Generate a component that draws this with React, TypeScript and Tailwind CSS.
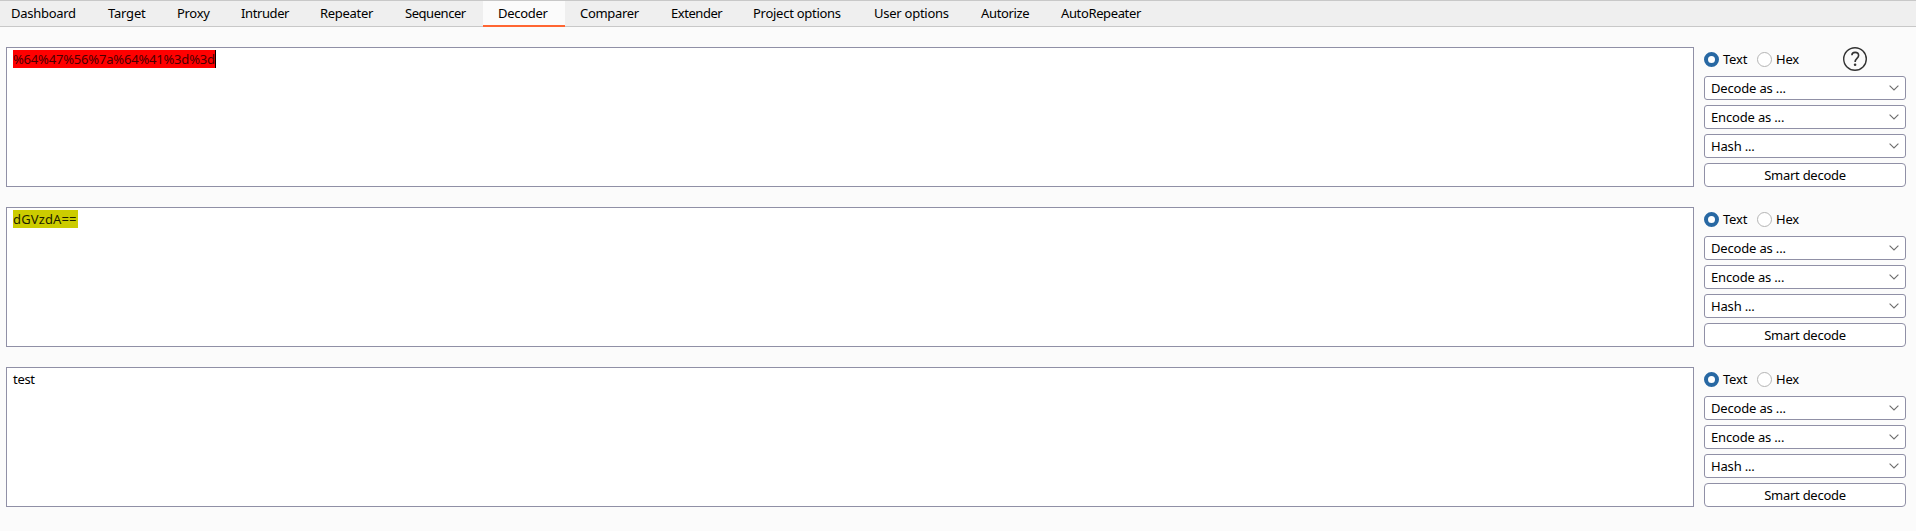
const tabs: { label: string; box: string; spacing: string }[] = [
  { label: 'Dashboard', box: 'w-[97px]', spacing: 'tracking-[-0.28px]' },
  { label: 'Target', box: 'w-[69px]', spacing: 'tracking-[-0.2px]' },
  { label: 'Proxy', box: 'w-[64px]', spacing: 'tracking-[-0.3px]' },
  { label: 'Intruder', box: 'w-[79px]', spacing: 'tracking-[-0.4px]' },
  { label: 'Repeater', box: 'w-[85px]', spacing: 'tracking-[-0.3px]' },
  { label: 'Sequencer', box: 'w-[93px]', spacing: 'tracking-[-0.45px]' },
  { label: 'Decoder', box: 'w-[82px]', spacing: 'tracking-[-0.3px]' },
  { label: 'Comparer', box: 'w-[91px]', spacing: 'tracking-[-0.3px]' },
  { label: 'Extender', box: 'w-[82px]', spacing: 'tracking-[-0.45px]' },
  { label: 'Project options', box: 'w-[121px]', spacing: 'tracking-[-0.27px]' },
  { label: 'User options', box: 'w-[107px]', spacing: 'tracking-[-0.25px]' },
  { label: 'Autorize', box: 'w-[80px]', spacing: 'tracking-[-0.35px]' },
  { label: 'AutoRepeater', box: 'w-[111px]', spacing: 'tracking-[-0.37px]' },
];

function TabBar() {
  return (
    <nav className="flex h-[27px] border-y border-[#c8c8c8] bg-[#efefef] pl-[11px]">
      {tabs.map(({ label, box, spacing }) => {
        const active = label === 'Decoder';
        return (
          <div
            key={label}
            className={`-ml-[15px] mr-[15px] h-[26px] shrink-0 pl-[15px] leading-[25px] whitespace-nowrap ${box} ${spacing} ${
              active ? 'border-b-2 border-[#ff6633] bg-[#fbfbfb]' : ''
            }`}
          >
            {label}
          </div>
        );
      })}
    </nav>
  );
}

function Radio({ label, checked }: { label: string; checked?: boolean }) {
  return (
    <label className="flex items-center gap-1">
      <span
        className={`size-[15px] rounded-full bg-white ${
          checked ? 'border-4 border-[#2868a3]' : 'border border-[#b4b4b4]'
        }`}
      />
      <span className="leading-[18px] tracking-[-0.2px]">{label}</span>
    </label>
  );
}

function Dropdown({ label }: { label: string }) {
  return (
    <div className="flex h-6 items-center justify-between rounded-[3px] border border-[#9090a6] bg-white pr-[6px] pl-[6px]">
      <span className="tracking-[-0.17px]">{label}</span>
      <svg width="10" height="6" viewBox="0 0 10 6" fill="none" stroke="#6e6e6e" strokeWidth="1.1">
        <path d="M0.6 0.6 5 5 9.4 0.6" />
      </svg>
    </div>
  );
}

function HelpIcon() {
  return (
    <svg width="24" height="24" viewBox="0 0 24 24" fill="none" stroke="#333333">
      <circle cx="12" cy="12" r="11.3" strokeWidth="1.4" />
      <path d="M8.9 8.2C8.9 6.3 10.3 5.4 12.1 5.4s3.5 1.1 3.5 3.1c0 2.8-3.5 3-3.5 6.4" strokeWidth="1.6" />
      <circle cx="12.1" cy="17.8" r="1.3" fill="#333333" stroke="none" />
    </svg>
  );
}

function Controls({ help }: { help?: boolean }) {
  return (
    <div className="flex w-[202px] flex-col gap-[5px]">
      <div className="flex h-6 items-center">
        <div className="w-[53px]">
          <Radio label="Text" checked />
        </div>
        <div className="w-[86px]">
          <Radio label="Hex" />
        </div>
        {help && <HelpIcon />}
      </div>
      <Dropdown label="Decode as ..." />
      <Dropdown label="Encode as ..." />
      <Dropdown label="Hash ..." />
      <button className="h-6 rounded-[4px] border border-[#9090a6] bg-white tracking-[-0.27px]">Smart decode</button>
    </div>
  );
}

const panels = [
  { text: '%64%47%56%7a%64%41%3d%3d', mark: 'w-[203px] border-r border-black bg-[#ff0000] text-[#4a0000] tracking-[-0.19px]' },
  { text: 'dGVzdA==', mark: 'w-[65px] bg-[#cccc00] text-[#1e1e00] tracking-[0.14px]' },
  { text: 'test', mark: 'tracking-[-0.3px]' },
];

export default function App() {
  return (
    <div className="h-[531px] w-[1916px] overflow-hidden bg-[#fbfbfb] font-['Noto_Sans',sans-serif] text-[13px] leading-[18px] text-black">
      <TabBar />
      <main className="flex flex-col gap-5 pt-5 pl-[6px]">
        {panels.map(({ text, mark }, i) => (
          <section key={text} className="flex h-[140px] gap-[10px]">
            <div className="w-[1688px] border border-[#9090a6] bg-white px-[6px] pt-[2px]">
              <div className={`h-[18px] whitespace-nowrap ${mark}`}>
                <span>{text}</span>
              </div>
            </div>
            <Controls help={i === 0} />
          </section>
        ))}
      </main>
    </div>
  );
}
